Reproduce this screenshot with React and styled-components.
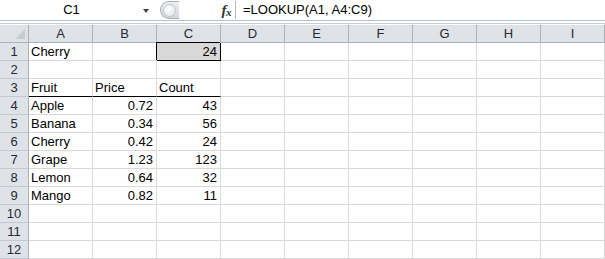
import React from "react";
import styled, { createGlobalStyle } from "styled-components";

const Global = createGlobalStyle`
  html, body { margin: 0; padding: 0; background: #fff; overflow: hidden; }
  body { font-family: "Liberation Sans", Arial, sans-serif; font-size: 13px; color: #000; }
`;

const Page = styled.div`
  width: 605px;
  height: 259px;
  display: flex;
  flex-direction: column;
  overflow: hidden;
`;

const FormulaBar = styled.div`
  height: 20px;
  display: flex;
  align-items: stretch;
  background: #fff;
`;

const NameBox = styled.div`
  width: 159px;
  display: flex;
  align-items: center;
`;

const NameText = styled.span`
  flex: 1;
  text-align: center;
  padding-left: 6px;
  line-height: 20px;
`;

const DropArrow = styled.span`
  width: 0;
  height: 0;
  border-left: 3.5px solid transparent;
  border-right: 3.5px solid transparent;
  border-top: 4px solid #444;
  margin: 2px 10px 0 6px;
`;

const Grip = styled.div`
  width: 16px;
  margin: 1px 0 1px 1px;
  border: 1px solid #a7adb4;
  border-right: none;
  border-radius: 9px 0 0 9px;
  background: linear-gradient(#eceef0, #d3d7db);
  display: flex;
  align-items: center;
  justify-content: flex-start;
  padding-left: 2px;
`;

const GripDot = styled.span`
  width: 11px;
  height: 11px;
  border-radius: 50%;
  background: radial-gradient(circle at 40% 35%, #ffffff, #e6e8ea 75%);
  border: 1px solid #c2c6cb;
`;

const FxArea = styled.div`
  width: 57px;
  box-sizing: border-box;
  display: flex;
  align-items: center;
  justify-content: flex-end;
  padding-right: 4px;
  border-right: 1px solid #b4b8bd;
  margin: 1px 0;
`;

const Fx = styled.span`
  font-family: "Liberation Serif", "Times New Roman", serif;
  font-style: italic;
  font-weight: bold;
  font-size: 15px;
  color: #333;
  letter-spacing: -0.5px;
`;

const FxSub = styled.span`
  font-size: 11px;
  position: relative;
  top: 1px;
`;

const FormulaText = styled.div`
  flex: 1;
  padding-left: 7px;
  line-height: 20px;
`;

const Divider = styled.div`
  height: 4px;
  border-top: 1px solid #b9bfc6;
  border-bottom: 1px solid #c9ced4;
  background: #fff;
  box-sizing: border-box;
  margin-bottom: 1px;
`;

const Grid = styled.div`
  display: grid;
  grid-template-columns: 29px repeat(9, 64px);
  grid-auto-rows: 18px;
`;

const Corner = styled.div`
  background: #dfe3e8;
  border-right: 1px solid #aab1b9;
  border-bottom: 1px solid #aab1b9;
  box-sizing: border-box;
  position: relative;
  &::after {
    content: "";
    position: absolute;
    right: 3px;
    bottom: 3px;
    width: 0;
    height: 0;
    border-left: 10px solid transparent;
    border-bottom: 10px solid #c7ccd2;
  }
`;

const ColHead = styled.div`
  background: #dfe3e8;
  border-right: 1px solid #aab1b9;
  border-bottom: 1px solid #aab1b9;
  box-sizing: border-box;
  text-align: center;
  line-height: 18px;
  color: #1f2a37;
`;

const RowHead = styled.div`
  background: #dfe3e8;
  border-right: 1px solid #aab1b9;
  border-bottom: 1px solid #c3c9d0;
  box-sizing: border-box;
  text-align: center;
  line-height: 18px;
  color: #1f2a37;
`;

const Cell = styled.div`
  border-right: 1px solid #d9d9d9;
  border-bottom: 1px solid ${(p) => (p.$underline ? "#000" : "#d9d9d9")};
  box-sizing: border-box;
  padding: 0 3px 0 2px;
  line-height: 18px;
  white-space: nowrap;
  overflow: hidden;
  text-align: ${(p) => (p.$num ? "right" : "left")};
  ${(p) =>
    p.$selected &&
    `
    background: #d8d8d8;
    border-right-color: #000;
    border-bottom-color: #000;
    box-shadow: -1px -1px 0 0 #000;
    position: relative;
    z-index: 1;
  `}
`;

const cols = ["A", "B", "C", "D", "E", "F", "G", "H", "I"];

const data = {
  1: ["Cherry", "", 24],
  3: ["Fruit", "Price", "Count"],
  4: ["Apple", 0.72, 43],
  5: ["Banana", 0.34, 56],
  6: ["Cherry", 0.42, 24],
  7: ["Grape", 1.23, 123],
  8: ["Lemon", 0.64, 32],
  9: ["Mango", 0.82, 11],
};

const fmt = (v) => (typeof v === "number" ? String(v) : v);

export default function App() {
  const rows = Array.from({ length: 12 }, (_, i) => i + 1);
  return (
    <Page>
      <Global />
      <FormulaBar>
        <NameBox>
          <NameText>C1</NameText>
          <DropArrow />
        </NameBox>
        <Grip>
          <GripDot />
        </Grip>
        <FxArea>
          <Fx>
            f<FxSub>x</FxSub>
          </Fx>
        </FxArea>
        <FormulaText>=LOOKUP(A1, A4:C9)</FormulaText>
      </FormulaBar>
      <Divider />
      <Grid>
        <Corner />
        {cols.map((c) => (
          <ColHead key={c}>{c}</ColHead>
        ))}
        {rows.map((r) => (
          <React.Fragment key={r}>
            <RowHead>{r}</RowHead>
            {cols.map((c, ci) => {
              const v = data[r] ? data[r][ci] : undefined;
              return (
                <Cell
                  key={c}
                  $num={typeof v === "number"}
                  $underline={r === 3 && ci < 3}
                  $selected={r === 1 && c === "C"}
                >
                  {v !== undefined ? fmt(v) : ""}
                </Cell>
              );
            })}
          </React.Fragment>
        ))}
      </Grid>
    </Page>
  );
}
